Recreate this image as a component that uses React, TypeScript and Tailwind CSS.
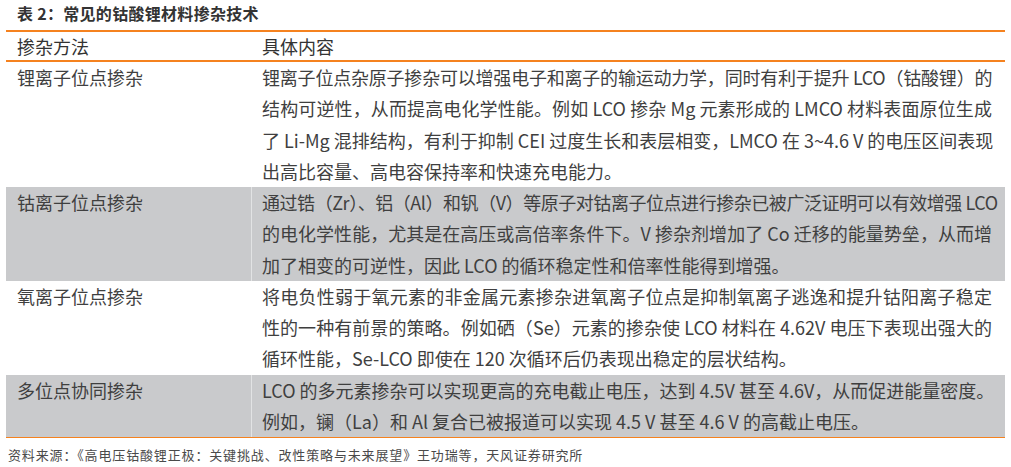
import React from "react";

type Line = { t: string; tight?: boolean };
type Row = { method: string; lines: Line[]; gray: boolean };

const rows: Row[] = [
  {
    method: "锂离子位点掺杂",
    gray: false,
    lines: [
      { t: "锂离子位点杂原子掺杂可以增强电子和离子的输运动力学，同时有利于提升 LCO（钴酸锂）的", tight: true },
      { t: "结构可逆性，从而提高电化学性能。例如 LCO 掺杂 Mg 元素形成的 LMCO 材料表面原位生成" },
      { t: "了 Li-Mg 混排结构，有利于抑制 CEI 过度生长和表层相变，LMCO 在 3~4.6 V 的电压区间表现" },
      { t: "出高比容量、高电容保持率和快速充电能力。" },
    ],
  },
  {
    method: "钴离子位点掺杂",
    gray: true,
    lines: [
      { t: "通过锆（Zr）、铝（Al）和钒（V）等原子对钴离子位点进行掺杂已被广泛证明可以有效增强 LCO", tight: true },
      { t: "的电化学性能，尤其是在高压或高倍率条件下。V 掺杂剂增加了 Co 迁移的能量势垒，从而增" },
      { t: "加了相变的可逆性，因此 LCO 的循环稳定性和倍率性能得到增强。" },
    ],
  },
  {
    method: "氧离子位点掺杂",
    gray: false,
    lines: [
      { t: "将电负性弱于氧元素的非金属元素掺杂进氧离子位点是抑制氧离子逃逸和提升钴阳离子稳定" },
      { t: "性的一种有前景的策略。例如硒（Se）元素的掺杂使 LCO 材料在 4.62V 电压下表现出强大的" },
      { t: "循环性能，Se-LCO 即使在 120 次循环后仍表现出稳定的层状结构。" },
    ],
  },
  {
    method: "多位点协同掺杂",
    gray: true,
    lines: [
      { t: "LCO 的多元素掺杂可以实现更高的充电截止电压，达到 4.5V 甚至 4.6V，从而促进能量密度。" },
      { t: "例如，镧（La）和 Al 复合已被报道可以实现 4.5 V 甚至 4.6 V 的高截止电压。" },
    ],
  },
];

function lineClass(l: Line, last: boolean): string {
  if (last) return "leading-[31.25px] whitespace-nowrap";
  if (l.tight)
    return "leading-[31.25px] whitespace-nowrap tracking-[-0.45px] text-justify [text-align-last:justify]";
  return "leading-[31.25px] whitespace-nowrap text-justify [text-align-last:justify]";
}

function TableRow({ row }: { row: Row }) {
  return (
    <div className={row.gray ? "flex bg-[#c9cacc]" : "flex bg-white"}>
      <div className="w-[245px] shrink-0 pl-[11px] leading-[31.25px] whitespace-nowrap">
        {row.method}
      </div>
      <div className={row.gray ? "w-px shrink-0 bg-[#e2e3e4]" : "w-px shrink-0 bg-white"} />
      <div className="flex-1 min-w-0 pl-[10px] pr-[13px]">
        {row.lines.map((l, i) => (
          <div key={i} className={lineClass(l, i === row.lines.length - 1)}>
            {l.t}
          </div>
        ))}
      </div>
    </div>
  );
}

export default function App() {
  return (
    <div className="w-[1011px] h-[467px] bg-white overflow-hidden font-['Noto_Sans_CJK_SC','Noto_Sans',sans-serif] text-[#3f3f3f]">
      <div className="h-[30px] pl-[17px] text-[16px] font-bold leading-[26px] tracking-[0.3px] text-[#333333] whitespace-nowrap">
        表 2：常见的钴酸锂材料掺杂技术
      </div>
      <div className="mx-[6px] flex h-[32px] items-center border-t-2 border-b-2 border-[#f5821f] text-[18px] text-[#333333]">
        <div className="w-[245px] shrink-0 pl-[11px]">掺杂方法</div>
        <div className="w-px shrink-0" />
        <div className="pl-[10px]">具体内容</div>
      </div>
      <div className="mx-[6px] text-[18px]">
        {rows.map((r, i) => (
          <TableRow key={i} row={r} />
        ))}
      </div>
      <div className="mx-[6px] border-t border-[#f5821f]" />
      <div className="pl-[8px] pt-[4px] text-[13px] leading-[26px] tracking-[0.85px] text-[#4a4a4a] whitespace-nowrap">
        资料来源：《高电压钴酸锂正极：关键挑战、改性策略与未来展望》王功瑞等，天风证券研究所
      </div>
    </div>
  );
}
